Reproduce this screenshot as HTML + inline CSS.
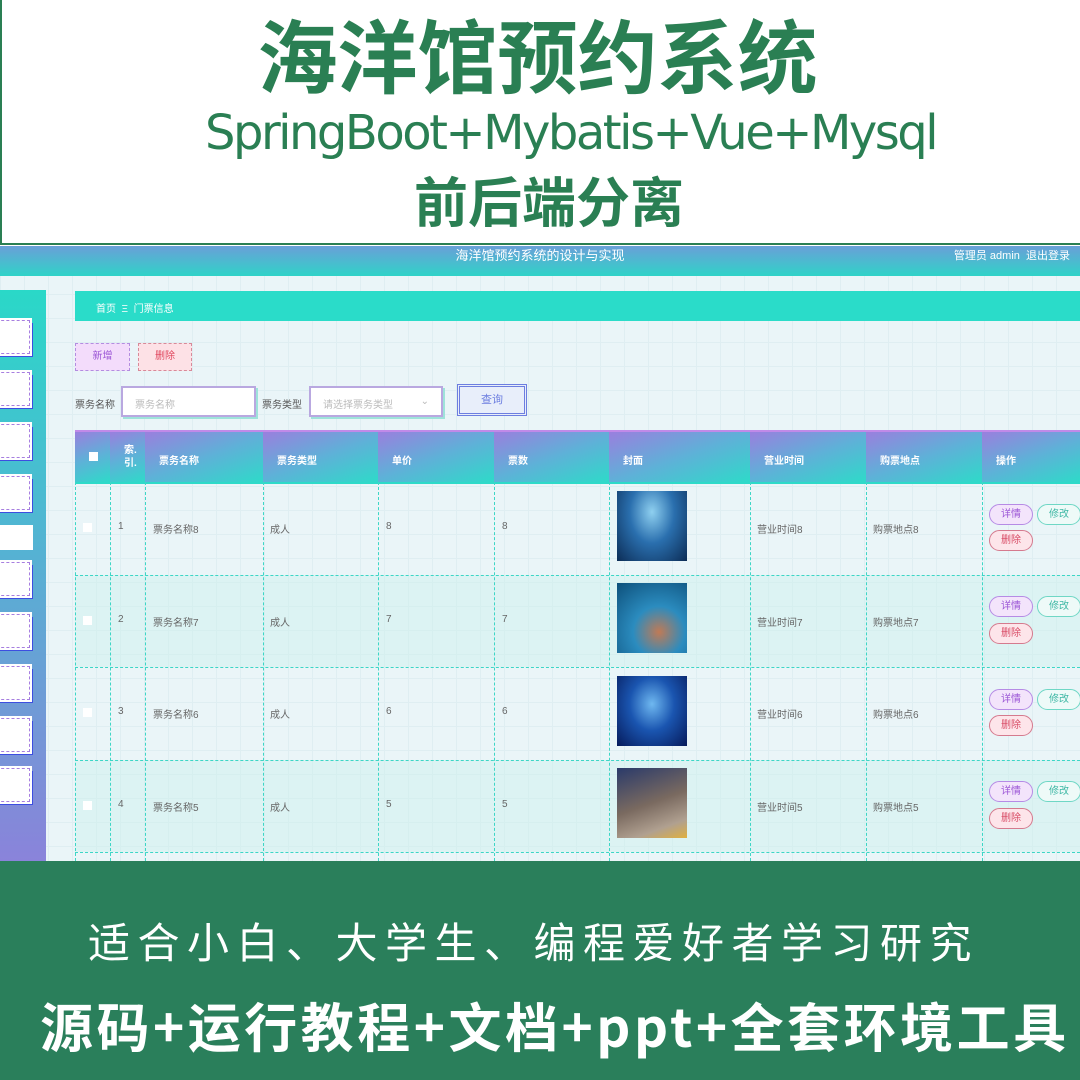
<!DOCTYPE html>
<html><head><meta charset="utf-8"><style>
*{margin:0;padding:0;box-sizing:border-box}
body{width:1080px;height:1080px;overflow:hidden;position:relative;background:#fff;font-family:"Liberation Sans","Noto Sans CJK SC",sans-serif}
.a{position:absolute}
.g{color:#2a7f53;white-space:nowrap}
.cell{position:absolute;font-size:10px;color:#666;white-space:nowrap}
.vl{position:absolute;border-left:1px dashed #3dd6c6}
.hl{position:absolute;left:75px;right:0;border-top:1px dashed #3dd6c6}
.th{position:absolute;top:432px;height:50px;background:linear-gradient(160deg,#9a7fde 0%,#5fb0d8 50%,#2edac9 100%);color:#fff;font-size:10px;font-weight:bold;padding:20px 0 0 14px}
.btn{position:absolute;width:44px;height:21px;border-radius:11px;font-size:10px;text-align:center;line-height:19px}
.side{position:absolute;left:-4px;width:34px;height:34px;background:#fff;border:1px dashed #a77ee0;box-shadow:3px 3px 0 #3d4ee0;outline:2px solid #fff}
.img{position:absolute;left:617px;width:70px;height:70px}
</style></head><body>
<div class="a" style="left:0;top:0;width:1080px;height:245px;background:#fff;border-left:2px solid #2a7f53;border-bottom:2px solid #2a7f53"></div>
<div class="a g" style="left:0;width:1075px;top:6px;text-align:center;font-size:80px;line-height:94px;font-weight:bold;font-family:'Noto Sans CJK SC',sans-serif">海洋馆预约系统</div>
<div class="a g" style="left:205px;top:102px;font-size:48px;line-height:62px;font-family:'DejaVu Sans','Liberation Sans',sans-serif;letter-spacing:-2.5px">SpringBoot+Mybatis+Vue+Mysql</div>
<div class="a g" style="left:0;width:1098px;top:166px;text-align:center;font-size:54px;line-height:66px;font-weight:bold;font-family:'Noto Sans CJK SC',sans-serif">前后端分离</div>

<div class="a" style="left:0;top:246px;width:1080px;height:615px;background:#eaf5f8;background-image:linear-gradient(#dfeef2 1px,transparent 1px),linear-gradient(90deg,#dfeef2 1px,transparent 1px);background-size:24px 24px"></div>
<div class="a" style="left:0;top:246px;width:1080px;height:30px;background:linear-gradient(180deg,#6a9fd8,#2fd3c8)"></div>
<div class="a" style="left:0;width:1080px;top:247px;text-align:center;color:#fff;font-size:13px;line-height:18px">海洋馆预约系统的设计与实现</div>
<div class="a" style="right:10px;top:248px;color:#fff;font-size:11px;line-height:16px">管理员 admin&nbsp;&nbsp;退出登录</div>
<div class="a" style="left:0;top:290px;width:46px;height:571px;background:linear-gradient(180deg,#2ad8c8 0%,#4fb7d2 40%,#8a83da 100%)"></div>
<div class="side" style="top:320px"></div>
<div class="side" style="top:372px"></div>
<div class="side" style="top:424px"></div>
<div class="side" style="top:476px"></div>
<div class="a" style="left:0;top:525px;width:33px;height:25px;background:#fff"></div>
<div class="side" style="top:562px"></div>
<div class="side" style="top:614px"></div>
<div class="side" style="top:666px"></div>
<div class="side" style="top:718px"></div>
<div class="side" style="top:768px"></div>

<div class="a" style="left:75px;top:291px;width:1005px;height:30px;background:#2adcc9;color:#fff;font-size:10px;padding:9px 0 0 21px">首页&nbsp;&nbsp;Ξ&nbsp;&nbsp;门票信息</div>
<div class="a" style="left:75px;top:343px;width:55px;height:28px;background:#f3dcfb;border:1px dashed #b38de0;color:#9b55d6;font-size:10px;text-align:center;line-height:26px">新增</div>
<div class="a" style="left:138px;top:343px;width:54px;height:28px;background:#fde1e6;border:1px dashed #d88a99;color:#e0445c;font-size:10px;text-align:center;line-height:26px">删除</div>
<div class="a" style="left:75px;top:396px;color:#555;font-size:10px">票务名称</div>
<div class="a" style="left:121px;top:386px;width:135px;height:31px;background:#fff;border:2px solid #b9a8e0;box-shadow:2px 2px 0 #9ee3da;color:#bbb;font-size:10px;padding:8px 12px">票务名称</div>
<div class="a" style="left:262px;top:396px;color:#555;font-size:10px">票务类型</div>
<div class="a" style="left:309px;top:386px;width:134px;height:31px;background:#fff;border:2px solid #b9a8e0;box-shadow:2px 2px 0 #9ee3da;color:#bbb;font-size:10px;padding:8px 12px">请选择票务类型<span style="float:right">⌄</span></div>
<div class="a" style="left:457px;top:384px;width:70px;height:32px;background:#e8eefa;border:3px double #6c7ee0;color:#6c7ee0;font-size:11px;text-align:center;line-height:26px">查询</div>

<div class="a" style="left:75px;top:430px;width:1005px;height:3px;background:#c08ae8"></div>
<div class="th" style="left:75px;width:35px"><span style="display:inline-block;width:9px;height:9px;background:#fff"></span></div>
<div class="th" style="left:110px;width:35px;padding-top:12px;line-height:13px">索.<br>引.</div>
<div class="th" style="left:145px;width:118px">票务名称</div>
<div class="th" style="left:263px;width:115px">票务类型</div>
<div class="th" style="left:378px;width:116px">单价</div>
<div class="th" style="left:494px;width:115px">票数</div>
<div class="th" style="left:609px;width:141px">封面</div>
<div class="th" style="left:750px;width:116px">营业时间</div>
<div class="th" style="left:866px;width:116px">购票地点</div>
<div class="th" style="left:982px;width:98px">操作</div>
<div class="a" style="left:75px;top:482px;width:1005px;height:2px;background:#2edac9"></div>

<div class="a" style="left:75px;top:575px;width:1005px;height:92px;background:rgba(200,240,235,.4)"></div>
<div class="a" style="left:75px;top:760px;width:1005px;height:92px;background:rgba(200,240,235,.4)"></div>
<div class="vl" style="left:75px;top:482px;bottom:219px"></div>
<div class="vl" style="left:110px;top:482px;bottom:219px"></div>
<div class="vl" style="left:145px;top:482px;bottom:219px"></div>
<div class="vl" style="left:263px;top:482px;bottom:219px"></div>
<div class="vl" style="left:378px;top:482px;bottom:219px"></div>
<div class="vl" style="left:494px;top:482px;bottom:219px"></div>
<div class="vl" style="left:609px;top:482px;bottom:219px"></div>
<div class="vl" style="left:750px;top:482px;bottom:219px"></div>
<div class="vl" style="left:866px;top:482px;bottom:219px"></div>
<div class="vl" style="left:982px;top:482px;bottom:219px"></div>
<div class="hl" style="top:575px"></div>
<div class="hl" style="top:667px"></div>
<div class="hl" style="top:760px"></div>
<div class="hl" style="top:852px"></div>

<div class="a" style="left:83px;top:523px;width:9px;height:9px;background:#fff"></div>
<div class="a" style="left:83px;top:616px;width:9px;height:9px;background:#fff"></div>
<div class="a" style="left:83px;top:708px;width:9px;height:9px;background:#fff"></div>
<div class="a" style="left:83px;top:801px;width:9px;height:9px;background:#fff"></div>

<div class="cell" style="left:118px;top:521px">1</div><div class="cell" style="left:153px;top:521px">票务名称8</div><div class="cell" style="left:270px;top:521px">成人</div><div class="cell" style="left:386px;top:521px">8</div><div class="cell" style="left:502px;top:521px">8</div><div class="cell" style="left:757px;top:521px">营业时间8</div><div class="cell" style="left:873px;top:521px">购票地点8</div>
<div class="cell" style="left:118px;top:614px">2</div><div class="cell" style="left:153px;top:614px">票务名称7</div><div class="cell" style="left:270px;top:614px">成人</div><div class="cell" style="left:386px;top:614px">7</div><div class="cell" style="left:502px;top:614px">7</div><div class="cell" style="left:757px;top:614px">营业时间7</div><div class="cell" style="left:873px;top:614px">购票地点7</div>
<div class="cell" style="left:118px;top:706px">3</div><div class="cell" style="left:153px;top:706px">票务名称6</div><div class="cell" style="left:270px;top:706px">成人</div><div class="cell" style="left:386px;top:706px">6</div><div class="cell" style="left:502px;top:706px">6</div><div class="cell" style="left:757px;top:706px">营业时间6</div><div class="cell" style="left:873px;top:706px">购票地点6</div>
<div class="cell" style="left:118px;top:799px">4</div><div class="cell" style="left:153px;top:799px">票务名称5</div><div class="cell" style="left:270px;top:799px">成人</div><div class="cell" style="left:386px;top:799px">5</div><div class="cell" style="left:502px;top:799px">5</div><div class="cell" style="left:757px;top:799px">营业时间5</div><div class="cell" style="left:873px;top:799px">购票地点5</div>

<div class="img" style="top:491px;background:radial-gradient(ellipse at 50% 30%,#8fd0f0,#2a6fae 45%,#0c2c55 100%)"></div>
<div class="img" style="top:583px;background:radial-gradient(circle at 60% 70%,#c07a55,#2b8cbf 40%,#0d4f7a 100%)"></div>
<div class="img" style="top:676px;background:radial-gradient(ellipse at 50% 40%,#6fb8f0,#1a55b0 45%,#061a5a 100%)"></div>
<div class="img" style="top:768px;background:linear-gradient(160deg,#2a3a6a,#7a6a60 50%,#b0a090 80%,#e0b040)"></div>

<div class="btn" style="left:989px;top:504px;border:1px solid #b68be5;background:#f3e4fb;color:#9b55d6">详情</div>
<div class="btn" style="left:1037px;top:504px;border:1px solid #6fd7c5;background:#eefaf8;color:#3fb8a5">修改</div>
<div class="btn" style="left:989px;top:530px;border:1px solid #d57a8e;background:#fde5ea;color:#d84a64">删除</div>
<div class="btn" style="left:989px;top:596px;border:1px solid #b68be5;background:#f3e4fb;color:#9b55d6">详情</div>
<div class="btn" style="left:1037px;top:596px;border:1px solid #6fd7c5;background:#eefaf8;color:#3fb8a5">修改</div>
<div class="btn" style="left:989px;top:623px;border:1px solid #d57a8e;background:#fde5ea;color:#d84a64">删除</div>
<div class="btn" style="left:989px;top:689px;border:1px solid #b68be5;background:#f3e4fb;color:#9b55d6">详情</div>
<div class="btn" style="left:1037px;top:689px;border:1px solid #6fd7c5;background:#eefaf8;color:#3fb8a5">修改</div>
<div class="btn" style="left:989px;top:715px;border:1px solid #d57a8e;background:#fde5ea;color:#d84a64">删除</div>
<div class="btn" style="left:989px;top:781px;border:1px solid #b68be5;background:#f3e4fb;color:#9b55d6">详情</div>
<div class="btn" style="left:1037px;top:781px;border:1px solid #6fd7c5;background:#eefaf8;color:#3fb8a5">修改</div>
<div class="btn" style="left:989px;top:808px;border:1px solid #d57a8e;background:#fde5ea;color:#d84a64">删除</div>

<div class="a" style="left:0;top:861px;width:1080px;height:219px;background:#2a7f5b"></div>
<div class="a" style="left:88px;top:913px;color:#fff;font-size:42px;line-height:56px;white-space:nowrap;letter-spacing:7.5px;font-family:'Noto Sans CJK SC',sans-serif">适合小白、大学生、编程爱好者学习研究</div>
<div class="a" style="left:40px;top:991px;color:#fff;font-size:53px;line-height:68px;font-weight:bold;white-space:nowrap;letter-spacing:3.5px;font-family:'Noto Sans CJK SC',sans-serif">源码+运行教程+文档+ppt+全套环境工具</div>
</body></html>
